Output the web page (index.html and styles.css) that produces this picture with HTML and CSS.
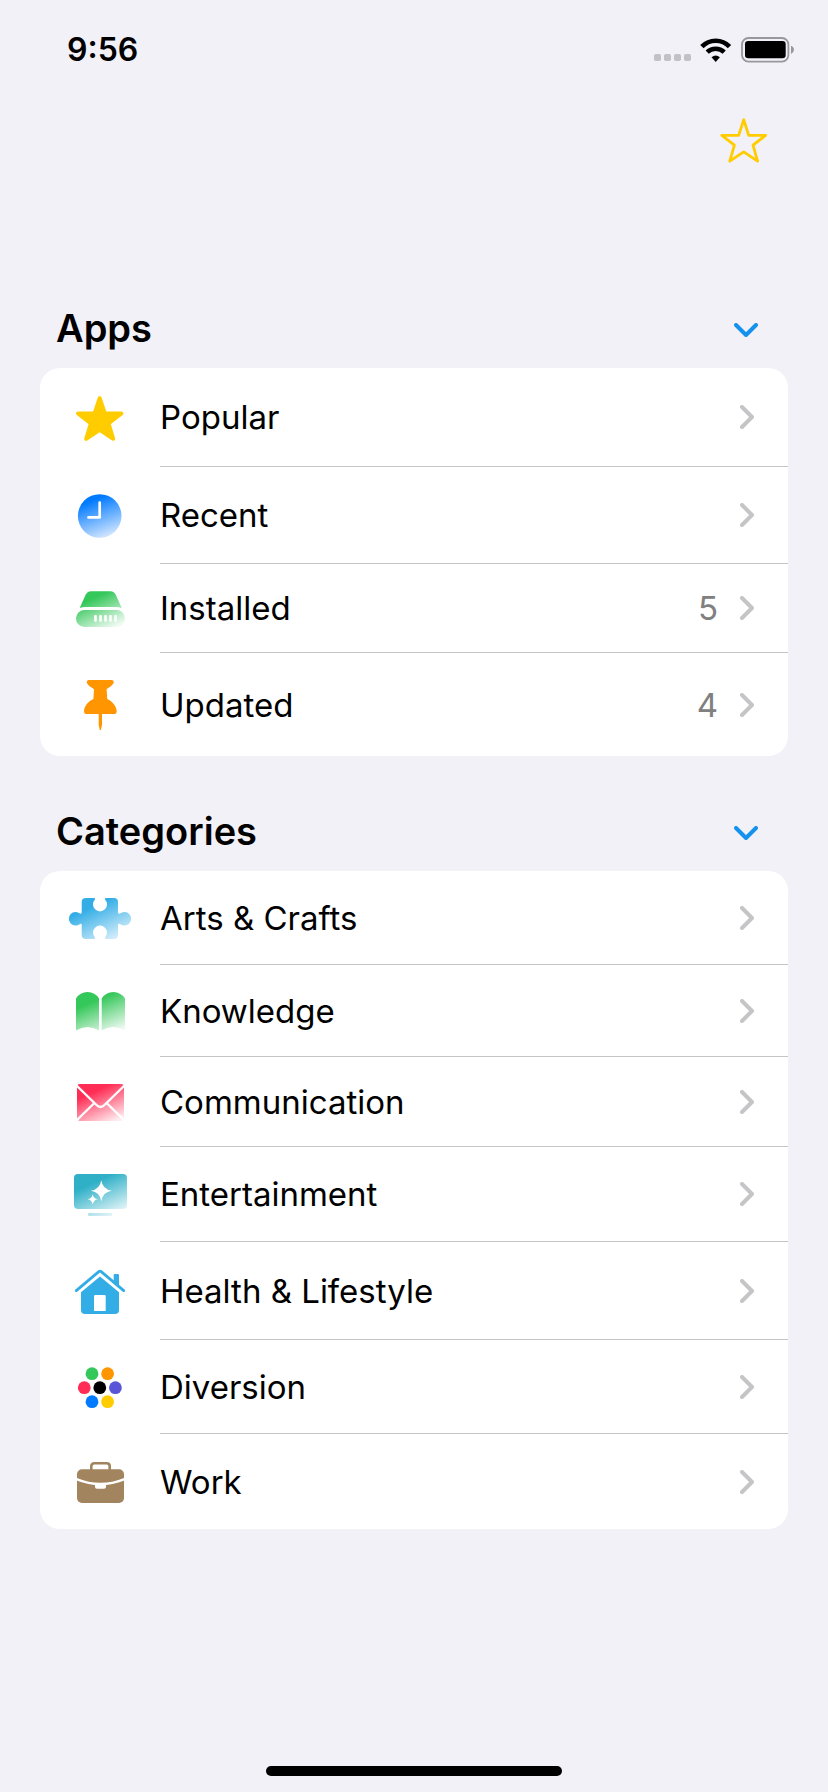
FILE: index.html
```html
<!DOCTYPE html>
<html lang="en">
<head>
<meta charset="utf-8">
<meta name="viewport" content="width=device-width, initial-scale=1">
<title>Apps</title>
<link rel="stylesheet" href="styles.css">
</head>
<body>
<div class="screen">
  <div class="status-bar">
    <time class="clock">9:56</time>
    <div class="indicators">
      <svg class="signal" width="37" height="7" viewBox="0 0 37 7" fill="#c2c2c6" aria-hidden="true"><rect width="7" height="7" rx="1.8"/><rect x="10" width="7" height="7" rx="1.8"/><rect x="20" width="7" height="7" rx="1.8"/><rect x="30" width="7" height="7" rx="1.8"/></svg>
      <svg width="32" height="24" viewBox="0 0 32 24" aria-hidden="true"><g fill="none" stroke="#000"><path d="M1.9 8.6A19.2 19.2 0 0 1 29.5 8.6" stroke-width="4.7"/><path d="M7.2 14.2A12 12 0 0 1 24.2 14.2" stroke-width="4.5"/></g><path d="M11.5 19.3Q15.7 15.6 19.9 19.3L15.7 24Z"/></svg>
      <svg width="54" height="26" viewBox="0 0 54 26" aria-hidden="true"><rect x="1" y="1" width="46.4" height="23.6" rx="6.5" fill="none" stroke="#98989c" stroke-width="1.8"/><rect x="4" y="4" width="40.7" height="17.3" rx="3.2"/><path d="M50 8.7Q53 10 53 12.8T50 17Z" fill="#98989c"/></svg>
    </div>
  </div>

  <header class="toolbar">
    <button class="icon-button" type="button" aria-label="Favorites">
      <svg width="48" height="48" viewBox="0 0 48 48" fill="none" stroke="#fc0" stroke-width="2.8" stroke-linejoin="round"><path d="M23.7 3.6L28.7 19.4L45.6 19.4L33 29.2L37.6 45.2L23.7 35.8L9.8 45.2L14.4 29.2L1.8 19.4L18.7 19.4Z"/></svg>
    </button>
  </header>

  <main class="content">
    <section class="group">
      <div class="group-header">
        <h2 class="group-title">Apps</h2>
        <button class="icon-button" type="button" aria-label="Collapse Apps" aria-expanded="true">
          <svg width="24" height="14" viewBox="0 0 24 14" class="chevron-down"><path d="M2 2L12 12L22 2"/></svg>
        </button>
      </div>
      <ul class="card">
        <li><a class="row" href="#">
          <span class="row-icon"><svg width="64" height="54" viewBox="0 0 64 54" fill="#fc0" stroke="#fc0" stroke-width="4" stroke-linejoin="round" aria-hidden="true"><path d="M31.7 8.2L36.8 23.5H53.4L40.5 33.4L45.2 48.8L31.7 39.8L18.2 48.8L22.9 33.4L10 23.5H26.6Z"/></svg></span>
          <span class="row-body"><span class="row-label">Popular</span><svg class="chevron" width="14" height="24" viewBox="0 0 14 24" aria-hidden="true"><path d="M2 2L12 12L2 22"/></svg></span>
        </a></li>
        <li><a class="row" href="#">
          <span class="row-icon"><svg width="64" height="52" viewBox="0 0 64 52" aria-hidden="true"><defs><linearGradient id="blue" x1=".32" y1=".05" x2=".68" y2="1"><stop offset=".08" stop-color="#007aff"/><stop offset="1" stop-color="#d8e9ff"/></linearGradient></defs><circle cx="31.7" cy="27" r="21.8" fill="url(#blue)"/><path d="M31.7 13.5V28.4H20.5" fill="none" stroke="#fff" stroke-width="2.7" stroke-linecap="round" stroke-linejoin="round"/></svg></span>
          <span class="row-body"><span class="row-label">Recent</span><svg class="chevron" width="14" height="24" viewBox="0 0 14 24" aria-hidden="true"><path d="M2 2L12 12L2 22"/></svg></span>
        </a></li>
        <li><a class="row" href="#">
          <span class="row-icon"><svg width="64" height="44" viewBox="0 0 64 44" aria-hidden="true"><defs><linearGradient id="drive" gradientUnits="userSpaceOnUse" x1="24" y1="5" x2="44" y2="47"><stop offset=".15" stop-color="#34c759"/><stop offset=".9" stop-color="#effaf2"/></linearGradient></defs><g fill="url(#drive)"><path d="M11.7 22L17.5 9Q19.2 5.2 23 5.2H42.4Q46.2 5.2 47.9 9L53.7 22Q50.5 21 48 21H17.4Q14.9 21 11.7 22Z"/><rect x="8" y="24" width="49" height="17" rx="8.5"/></g><g fill="#fff"><rect x="26.2" y="29" width="2.6" height="6.8" rx="1"/><rect x="31.2" y="29" width="2.6" height="6.8" rx="1"/><rect x="36.2" y="29" width="2.6" height="6.8" rx="1"/><rect x="41.2" y="29" width="2.6" height="6.8" rx="1"/><rect x="46.2" y="29" width="2.6" height="6.8" rx="1"/></g></svg></span>
          <span class="row-body"><span class="row-label">Installed</span><span class="row-count">5</span><svg class="chevron" width="14" height="24" viewBox="0 0 14 24" aria-hidden="true"><path d="M2 2L12 12L2 22"/></svg></span>
        </a></li>
        <li><a class="row" href="#">
          <span class="row-icon"><svg width="64" height="59" viewBox="0 0 64 59" fill="#ff9500" aria-hidden="true"><path d="M20.5 5H44Q46 5 45.7 7.5C45.3 10 41 12.5 38.6 14.2L39.3 24C44 26 48.7 31 48.7 36.5Q48.7 39 46.5 39H34V50L32.9 55H31.8L30.7 50V39H18.2Q16 39 16 36.5C16 31 20.5 26 25.4 24L26 14.2C23.5 12.5 19.3 10 18.8 7.5Q18.7 5 20.5 5Z"/></svg></span>
          <span class="row-body"><span class="row-label">Updated</span><span class="row-count">4</span><svg class="chevron" width="14" height="24" viewBox="0 0 14 24" aria-hidden="true"><path d="M2 2L12 12L2 22"/></svg></span>
        </a></li>
      </ul>
    </section>

    <section class="group">
      <div class="group-header">
        <h2 class="group-title">Categories</h2>
        <button class="icon-button" type="button" aria-label="Collapse Categories" aria-expanded="true">
          <svg width="24" height="14" viewBox="0 0 24 14" class="chevron-down"><path d="M2 2L12 12L22 2"/></svg>
        </button>
      </div>
      <ul class="card">
        <li><a class="row" href="#">
          <span class="row-icon"><svg width="64" height="49" viewBox="0 0 64 49" aria-hidden="true"><defs><linearGradient id="sky" gradientUnits="userSpaceOnUse" x1="20" y1="5" x2="42" y2="52"><stop offset=".18" stop-color="#32ade6"/><stop offset="1" stop-color="#e4f4fc"/></linearGradient></defs><path fill="url(#sky)" d="M18 5H26Q27.3 5 27 6.5A7 7 0 1 0 37 6.5Q36.7 5 38 5H46Q50 5 50 9V19Q50 21.5 52 20.5A6.8 6.8 0 1 1 52 31Q50 30 50 32V42Q50 46 46 46H38Q36.7 46 37 44.5A7 7 0 1 0 27 44.5Q27.3 46 26 46H18Q13.7 46 13.7 42V32Q13.7 30 12 31A6.8 6.8 0 1 1 12 20.5Q13.7 21.5 13.7 19V9Q13.7 5 18 5Z"/></svg></span>
          <span class="row-body"><span class="row-label">Arts &amp; Crafts</span><svg class="chevron" width="14" height="24" viewBox="0 0 14 24" aria-hidden="true"><path d="M2 2L12 12L2 22"/></svg></span>
        </a></li>
        <li><a class="row" href="#">
          <span class="row-icon"><svg width="64" height="47" viewBox="0 0 64 47" aria-hidden="true"><defs><linearGradient id="green" gradientUnits="userSpaceOnUse" x1="22" y1="5" x2="41" y2="50"><stop offset=".2" stop-color="#34c759"/><stop offset=".95" stop-color="#effaf2"/></linearGradient></defs><path fill="url(#green)" d="M8 11.5Q12 5 19.5 5T31 11.5V43.5Q19.5 36.5 8 43.5ZM33.7 11.5Q38 5 45.3 5T57 11.5V43.5Q45.3 36.5 33.7 43.5Z"/></svg></span>
          <span class="row-body"><span class="row-label">Knowledge</span><svg class="chevron" width="14" height="24" viewBox="0 0 14 24" aria-hidden="true"><path d="M2 2L12 12L2 22"/></svg></span>
        </a></li>
        <li><a class="row" href="#">
          <span class="row-icon"><svg width="64" height="45" viewBox="0 0 64 45" aria-hidden="true"><defs><linearGradient id="pink" gradientUnits="userSpaceOnUse" x1="23" y1="5" x2="42" y2="47"><stop offset=".18" stop-color="#ff2d55"/><stop offset=".95" stop-color="#ffeef1"/></linearGradient></defs><rect x="9" y="5" width="47" height="37" rx="3" fill="url(#pink)"/><path d="M8.5 6.5L28.5 26Q32.5 30 36.5 26L56.5 6.5M8.5 41.5L26.4 24M56.5 41.5L38.6 24" fill="none" stroke="#fff" stroke-width="2.4"/></svg></span>
          <span class="row-body"><span class="row-label">Communication</span><svg class="chevron" width="14" height="24" viewBox="0 0 14 24" aria-hidden="true"><path d="M2 2L12 12L2 22"/></svg></span>
        </a></li>
        <li><a class="row" href="#">
          <span class="row-icon"><svg width="64" height="50" viewBox="0 0 64 50" aria-hidden="true"><defs><linearGradient id="teal" gradientUnits="userSpaceOnUse" x1="22" y1="5" x2="42" y2="48"><stop offset=".2" stop-color="#30b0c7"/><stop offset="1" stop-color="#e6f6f9"/></linearGradient></defs><g fill="url(#teal)"><rect x="6" y="5" width="53" height="35" rx="4"/><rect x="20" y="44" width="24.3" height="3" rx="1.2"/></g><path fill="#fff" d="M33.3 11.2Q34.6 20.4 43.8 21.7Q34.6 23 33.3 32.2Q32 23 22.8 21.7Q32 20.4 33.3 11.2ZM24.7 25.2Q25.5 29.5 29.8 30.3Q25.5 31.1 24.7 35.4Q23.9 31.1 19.6 30.3Q23.9 29.5 24.7 25.2Z"/></svg></span>
          <span class="row-body"><span class="row-label">Entertainment</span><svg class="chevron" width="14" height="24" viewBox="0 0 14 24" aria-hidden="true"><path d="M2 2L12 12L2 22"/></svg></span>
        </a></li>
        <li><a class="row" href="#">
          <span class="row-icon"><svg width="64" height="53" viewBox="0 0 64 53" fill="#32ade6" aria-hidden="true"><path d="M8.3 26.6L30.8 7.6Q32 6.6 33.2 7.6L55.7 26.6" fill="none" stroke="#32ade6" stroke-width="2.8" stroke-linecap="round"/><path d="M45.7 17V11.2Q45.7 10 46.9 10H49.8Q51 10 51 11.2V21.5Z"/><path fill-rule="evenodd" d="M32 12.4L51 28.3V46Q51 50 47 50H17Q13 50 13 46V28.3ZM27.2 31Q26 31 26 32.2V47H37.7V32.2Q37.7 31 36.5 31Z"/></svg></span>
          <span class="row-body"><span class="row-label">Health &amp; Lifestyle</span><svg class="chevron" width="14" height="24" viewBox="0 0 14 24" aria-hidden="true"><path d="M2 2L12 12L2 22"/></svg></span>
        </a></li>
        <li><a class="row" href="#">
          <span class="row-icon"><svg width="64" height="49" viewBox="0 0 64 49" aria-hidden="true"><circle cx="24" cy="11.7" r="6.4" fill="#34c759"/><circle cx="39.6" cy="11.7" r="6.4" fill="#ff9500"/><circle cx="16.3" cy="25.7" r="6.4" fill="#ff2d55"/><circle cx="31.8" cy="25.7" r="6.4"/><circle cx="47.4" cy="25.7" r="6.4" fill="#5856d6"/><circle cx="24" cy="39.7" r="6.4" fill="#007aff"/><circle cx="39.6" cy="39.7" r="6.4" fill="#fc0"/></svg></span>
          <span class="row-body"><span class="row-label">Diversion</span><svg class="chevron" width="14" height="24" viewBox="0 0 14 24" aria-hidden="true"><path d="M2 2L12 12L2 22"/></svg></span>
        </a></li>
        <li><a class="row" href="#">
          <span class="row-icon"><svg width="64" height="51" viewBox="0 0 64 51" aria-hidden="true"><path d="M23.3 14.5V10.3Q23.3 7.3 26.3 7.3H38.7Q41.7 7.3 41.7 10.3V14.5" fill="none" stroke="#a2845e" stroke-width="2.6"/><rect x="9" y="13.3" width="47" height="33.7" rx="5" fill="#a2845e"/><path d="M8.5 23.1Q32.5 33 56.5 23.1" fill="none" stroke="#fff" stroke-width="2.6"/><path d="M27 28H38V30.8Q38 32.7 36.1 32.7H28.9Q27 32.7 27 30.8Z" fill="#fff"/></svg></span>
          <span class="row-body"><span class="row-label">Work</span><svg class="chevron" width="14" height="24" viewBox="0 0 14 24" aria-hidden="true"><path d="M2 2L12 12L2 22"/></svg></span>
        </a></li>
      </ul>
    </section>
  </main>

  <div class="home-indicator"></div>
</div>
</body>
</html>
```

FILE: styles.css
```css
* {
  box-sizing: border-box;
}

body {
  margin: 0;
  background: #f2f1f7;
  color: #000;
  font-family: Inter, "Liberation Sans", sans-serif;
}

svg {
  display: block;
  flex: none;
}

.screen {
  display: flex;
  flex-direction: column;
  min-height: 100vh;
  padding-bottom: 16px;
}

.status-bar {
  display: flex;
  align-items: center;
  justify-content: space-between;
  height: 100px;
  padding: 0 33px 0 67px;
}

.clock {
  font-size: 32px;
  line-height: 40px;
  font-weight: 600;
}

.indicators {
  display: flex;
  align-items: center;
  gap: 9px;
}

.signal {
  align-self: flex-end;
  margin-bottom: 2px;
}

.toolbar {
  display: flex;
  justify-content: flex-end;
  padding: 16px 60px 0;
}

.icon-button {
  padding: 0;
  border: 0;
  background: none;
  color: inherit;
  cursor: pointer;
}

.content {
  flex: 1;
  padding: 128px 40px 40px;
}

.group + .group {
  margin-top: 39px;
}

.group-header {
  display: flex;
  align-items: center;
  justify-content: space-between;
  height: 76px;
  padding: 0 30px 0 16px;
}

.group-title {
  margin: 0;
  padding-bottom: 4px;
  font-size: 38px;
  line-height: 48px;
  font-weight: 600;
}

.chevron-down,
.chevron {
  fill: none;
  stroke-width: 4;
  stroke-linecap: round;
  stroke-linejoin: round;
}

.chevron-down {
  stroke: #1593ec;
}

.chevron {
  stroke: #c5c5c7;
}

.card {
  margin: 0;
  padding: 0;
  overflow: hidden;
  list-style: none;
  background: #fff;
  border-radius: 20px;
}

.row {
  display: flex;
  color: inherit;
  text-decoration: none;
}

.row-icon {
  padding: 22px 28px;
  border-bottom: 1px solid transparent;
}

.row-body {
  display: flex;
  flex: 1;
  align-items: center;
  gap: 22px;
  padding-right: 34px;
  border-bottom: 1px solid #c5c5c7;
  font-size: 33px;
  line-height: 40px;
}

li:last-child .row-icon,
li:last-child .row-body {
  border-bottom: 0;
}

.row-label {
  flex: 1;
}

.row-count {
  color: #808080;
}

.home-indicator {
  align-self: center;
  width: 296px;
  height: 10px;
  border-radius: 5px;
  background: #000;
}
```
